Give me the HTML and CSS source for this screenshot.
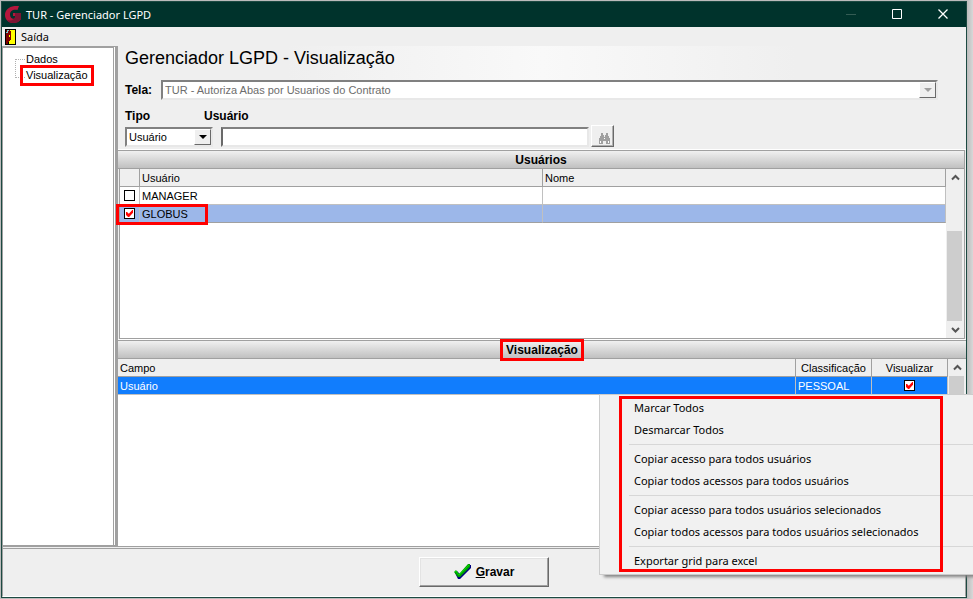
FILE: index.html
```html
<!DOCTYPE html>
<html lang="pt-BR">
<head>
<meta charset="utf-8">
<title>TUR - Gerenciador LGPD</title>
<link rel="stylesheet" href="styles.css">
</head>
<body>
<div class="window">
  <header class="titlebar">
    <svg class="logo" width="17" height="17" viewBox="0 0 17 17" aria-hidden="true">
      <path d="M14 0L12.500 4C8 3 5 5 5 8.500C5 12 7.500 13.500 10 12.500V10H8V7h8v6c-2 3-5 4-8 4C3 17 0 13 0 9 0 3 6-1 14 0z" fill="#b5173d"/>
      <path d="M10 7h6v6c-2 3-5 4-8 4-3 0-5-1-6-3 4 1 7 0 8-3z" fill="#7b1533"/>
    </svg>
    <span class="title">TUR - Gerenciador LGPD</span>
    <div class="controls">
      <button type="button" aria-label="Minimizar"><svg width="11" height="11"><path d="M0 5.500h10" stroke="#345c54"/></svg></button>
      <button type="button" aria-label="Maximizar"><svg width="11" height="11"><path d="M.5.5h9v9h-9z" fill="none" stroke="#fff"/></svg></button>
      <button type="button" aria-label="Fechar"><svg width="11" height="11"><path d="M.5.5l9 9M9.500.5l-9 9" stroke="#fff" stroke-width="1.300"/></svg></button>
    </div>
  </header>
  <nav class="menubar">
    <button type="button" class="exit">
      <svg width="11" height="16" viewBox="0 0 11 16" aria-hidden="true" shape-rendering="crispEdges">
        <path d="M0 0h11v16H0z" fill="#000"/><path d="M4 1h6v14H4z" fill="#ff0"/><path d="M1 1h3l2 2v8l-2 1-1 3H1z" fill="#800000"/><path d="M2 1h2v1H3v2H2zM1 3h1v1H1z" fill="#7cc"/><path d="M4 6h1v2H4z" fill="#ff0"/>
      </svg>
      <span>Saída</span>
    </button>
  </nav>
  <div class="main">
    <aside class="tree">
      <ul>
        <li><a href="#dados">Dados</a></li>
        <li><a href="#visualizacao" class="marked">Visualização</a></li>
      </ul>
    </aside>
    <main class="content">
      <form class="filters">
        <h1>Gerenciador LGPD - Visualização</h1>
        <div class="screen">
          <label for="tela">Tela:</label>
          <span class="combo wide disabled"><select id="tela" disabled><option>TUR - Autoriza Abas por Usuarios do Contrato</option></select><span class="arrow"></span></span>
        </div>
        <div class="search">
          <div class="field type"><label for="tipo">Tipo</label>
            <span class="combo"><select id="tipo"><option>Usuário</option></select><span class="arrow"></span></span></div>
          <div class="field user"><label for="usuario">Usuário</label>
            <input id="usuario" type="text"></div>
          <button type="button" class="find" aria-label="Procurar" disabled>
            <svg width="11" height="11" viewBox="0 0 11 11" shape-rendering="crispEdges"><path d="M2 0h2v2h1v2h1V2h1V0h2v3h1v2h1v6H7V8H4v3H0V5h1V3h1z" fill="#a0a0a0"/><path d="M1 8h1v2H1zM9 8h1v2H9zM5 5h1v1H5z" fill="#fff"/></svg>
          </button>
        </div>
      </form>
      <section class="panel users">
        <h2>Usuários</h2>
        <div class="grid">
          <table>
            <colgroup><col class="c-check"><col><col></colgroup>
            <thead><tr><th></th><th>Usuário</th><th>Nome</th></tr></thead>
            <tbody>
              <tr><td class="tick"><input type="checkbox" aria-label="MANAGER"></td><td>MANAGER</td><td></td></tr>
              <tr class="current"><td class="tick"><input type="checkbox" aria-label="GLOBUS" checked><span class="mark-row"></span></td><td>GLOBUS</td><td></td></tr>
            </tbody>
          </table>
          <div class="scroll">
            <svg width="17" height="17"><path d="M5 10.500l3.500-3.500 3.500 3.500" fill="none" stroke="#555" stroke-width="2"/></svg>
            <span class="thumb"></span>
            <svg width="17" height="17"><path d="M5 7l3.500 3.500L12 7" fill="none" stroke="#555" stroke-width="2"/></svg>
          </div>
        </div>
      </section>
      <section class="panel fields">
        <h2><span class="marked">Visualização</span></h2>
        <div class="grid">
          <table>
            <colgroup><col><col class="c-small"><col class="c-small"></colgroup>
            <thead><tr><th>Campo</th><th class="center">Classificação</th><th class="center">Visualizar</th></tr></thead>
            <tbody><tr class="selected"><td>Usuário</td><td>PESSOAL</td><td class="tick"><input type="checkbox" aria-label="Visualizar Usuário" checked></td></tr></tbody>
          </table>
          <div class="scroll">
            <svg width="17" height="17"><path d="M5 10.500l3.500-3.500 3.500 3.500" fill="none" stroke="#555" stroke-width="2"/></svg>
            <span class="thumb"></span>
          </div>
        </div>
      </section>
    </main>
  </div>
  <footer class="footer">
    <button type="button" class="save">
      <svg width="17" height="16" viewBox="0 0 17 16" aria-hidden="true"><path d="M1 9l2-2 3 3L15 1h2v3L6 15H4z" fill="#000080"/><path d="M0 8l2-2 3 4L14 0h2v3L6 13H4z" fill="#00a000"/><path d="M1 8l1-1 3 4L15 1" fill="none" stroke="#00e000"/></svg>
      <span><u>G</u>ravar</span>
    </button>
  </footer>
</div>
<div class="context">
  <div class="items">
    <button type="button">Marcar Todos</button>
    <button type="button">Desmarcar Todos</button>
    <hr>
    <button type="button">Copiar acesso para todos usuários</button>
    <button type="button">Copiar todos acessos para todos usuários</button>
    <hr>
    <button type="button">Copiar acesso para todos usuários selecionados</button>
    <button type="button">Copiar todos acessos para todos usuários selecionados</button>
    <hr>
    <button type="button">Exportar grid para excel</button>
  </div>
  <span class="mark-menu"></span>
</div>
</body>
</html>
```

FILE: styles.css
```css
* { box-sizing: border-box; }
body {
  margin: 0;
  height: 100vh;
  padding: 1px 6px 1px 1px;
  background: linear-gradient(to left, #d8d8d8, #bcbcbc 6px);
  font: 11px/16px "Liberation Sans", Arial, sans-serif;
  color: #000;
  overflow: hidden;
}
button, input, select { font: inherit; color: inherit; margin: 0; }
button { border: 0; background: none; padding: 0; }
a { color: inherit; text-decoration: none; }

.window {
  height: 100%;
  display: flex;
  flex-direction: column;
  background: #efefef;
  border: 1px solid #1c4a42;
  border-top: 0;
}
.titlebar {
  height: 26px;
  flex: none;
  display: flex;
  align-items: center;
  gap: 4px;
  padding-left: 3px;
  background: #00332c;
  border-top: 1px solid #1c4a42;
  color: #fff;
}
.title, .exit, .context { font-family: "Noto Sans", sans-serif; font-size: 11px; }
.controls { margin-left: auto; display: flex; }
.controls button { width: 46px; height: 24px; display: grid; place-items: center; }
.menubar { height: 19px; flex: none; display: flex; align-items: center; padding-left: 3px; }
.exit { display: flex; align-items: center; gap: 5px; }

.main { flex: 1; min-height: 0; display: flex; }
.tree {
  width: 114px;
  flex: none;
  background: #fff;
  border: 1px solid #a0a0a0;
  border-top-width: 2px;
  border-right: 3px double #a0a0a0;
}
.tree ul { list-style: none; margin: 3px 0 0 12px; padding: 0; width: 10px; height: 26px; position: relative; }
.tree ul::before {
  content: "";
  position: absolute;
  top: 8px;
  left: 0;
  width: 9px;
  height: 17px;
  border: 1px dotted #b0b0b0;
  border-right: 0;
}
.tree li { height: 16px; padding-left: 11px; white-space: nowrap; }
.marked { position: relative; }
.tree .marked::after, h2 .marked::after {
  content: "";
  position: absolute;
  inset: -4px -6px -5px;
  border: 3px solid #f00;
}
.content { flex: 1; min-width: 0; display: flex; flex-direction: column; border-left: 2px solid #a0a0a0; }

.filters {
  height: 104px;
  flex: none;
  padding: 0 28px 0 7px;
  border-bottom: 1px solid #fff;
  background: linear-gradient(90deg, #efefef 20%, #f9f9f9 50%, #efefef 80%) top / 100% 50px no-repeat;
}
h1 { margin: 0; padding-top: 2px; height: 34px; font-size: 18px; line-height: 20px; font-weight: 400; }
.filters label { font-size: 12px; font-weight: 700; }
.screen { display: flex; align-items: center; height: 20px; gap: 7px; }
.screen label { width: 29px; }
.combo {
  position: relative;
  display: block;
  height: 20px;
  background: #fff;
  border: 2px solid;
  border-color: #808080 #e8e8e8 #e8e8e8 #808080;
}
.wide { flex: 1; }
.combo select { appearance: none; display: block; width: 100%; height: 16px; border: 0; background: none; padding: 0 18px 0 2px; line-height: 16px; }
.combo select:disabled { color: #6d6d6d; opacity: 1; }
.arrow {
  position: absolute;
  top: 0;
  right: 0;
  width: 17px;
  height: 16px;
  background: #efefef;
  border: 1px solid;
  border-color: #fff #696969 #696969 #fff;
  pointer-events: none;
}
.arrow::after { content: ""; position: absolute; left: 4px; top: 5px; border: 4px solid transparent; border-top-color: #000; border-bottom: 0; }
.disabled .arrow::after { border-top-color: #a0a0a0; }
.search { display: flex; align-items: flex-end; margin-top: 8px; gap: 2px; }
.field { display: flex; flex-direction: column; gap: 2px; }
.field label { height: 17px; }
.type { width: 88px; }
.user { width: 368px; margin-left: 6px; }
.user label { margin-left: -17px; }
.user input { width: 100%; height: 20px; border: 2px solid; border-color: #808080 #e8e8e8 #e8e8e8 #696969; background: #fff; padding: 0 2px; }
.find {
  width: 23px;
  height: 22px;
  border: 1px solid;
  border-color: #fff #696969 #696969 #fff;
  display: flex;
  align-items: flex-end;
  justify-content: center;
  padding: 0 0 2px 4px;
  box-shadow: inset -1px -1px #b0b0b0;
}

.panel { display: flex; flex-direction: column; min-height: 0; }
.users { height: 189px; flex: none; margin-right: 1px; border-right: 1px solid #a0a0a0; }
.fields { flex: 1; border-top: 1px solid #fff; }
h2 {
  margin: 0;
  height: 19px;
  flex: none;
  border: 1px solid #a0a0a0;
  border-width: 1px 0;
  background: linear-gradient(#f0f0f0, #c0c0c0);
  text-align: center;
  font-size: 12px;
  line-height: 18px;
}
h2 .marked::after { inset: -4px -6px; }
.grid { flex: 1; min-height: 0; display: flex; align-items: flex-start; background: #fff; }
.users .grid { margin-left: 1px; border-left: 1px solid #a0a0a0; border-bottom: 1px solid #a0a0a0; }
table { flex: 1; width: 100%; border-collapse: separate; border-spacing: 0; table-layout: fixed; }
.c-check { width: 20px; }
.c-small { width: 76px; }
th, td { height: 18px; padding: 0 2px; line-height: 16px; text-align: left; font-weight: 400; border-right: 1px solid #a0a0a0; border-bottom: 1px solid #a0a0a0; white-space: nowrap; }
th { background: #efefef; }
td { border-color: #c0c0c0; }
.center { text-align: center; }
.current td { background: #9cb7e9; border-bottom-color: #a0a0a0; }
.selected td { background: #117dfd; color: #fff; }
.tick { position: relative; padding: 0; text-align: center; }
.tick input { appearance: none; display: block; position: relative; width: 11px; height: 11px; margin: 0 auto; border: 1px solid #000; background: #fff; }
.tick input:checked::after { content: ""; position: absolute; inset: 1px; background: #f00; clip-path: polygon(0 30%, 15% 30%, 40% 55%, 90% 0, 100% 0, 100% 40%, 45% 100%, 30% 100%, 0 70%); }
.mark-row { position: absolute; left: -4px; top: -1px; width: 92px; height: 21px; border: 3px solid #f00; z-index: 1; }
.scroll { align-self: stretch; width: 18px; flex: none; padding-left: 1px; display: flex; flex-direction: column; background: #efefef; }
.scroll svg { flex: none; display: block; }
.thumb { width: 15px; flex: 1; background: #cdcdcd; }
.users .thumb { flex: none; height: 90px; margin-top: auto; }

.footer {
  height: 51px;
  flex: none;
  display: flex;
  justify-content: center;
  padding-top: 8px;
  border: 1px solid #a0a0a0;
  border-top: 3px double #a0a0a0;
  border-bottom: 1px solid #fff;
}
.save {
  width: 130px;
  height: 30px;
  display: flex;
  align-items: center;
  justify-content: center;
  gap: 5px;
  border: 1px solid;
  border-color: #fff #696969 #696969 #fff;
  box-shadow: inset -1px -1px #a0a0a0, inset 1px 1px #e3e3e3;
  font-size: 12px;
  font-weight: 700;
}
.context {
  position: absolute;
  top: 394px;
  left: 599px;
  right: 0;
  padding: 2px 0 2px 29px;
  background: #f1f1f1;
  border: 1px solid #ccc;
  border-right: 0;
  box-shadow: 4px 3px 3px -1px #808080;
}
.items { display: flex; flex-direction: column; }
.items button { height: 22px; padding-left: 5px; text-align: left; white-space: nowrap; }
hr { width: 100%; margin: 3px 0; border: 0; border-top: 1px solid #d7d7d7; }
.mark-menu { position: absolute; top: 1px; left: 19px; right: 30px; bottom: 2px; border: 3px solid #f00; pointer-events: none; }
```
